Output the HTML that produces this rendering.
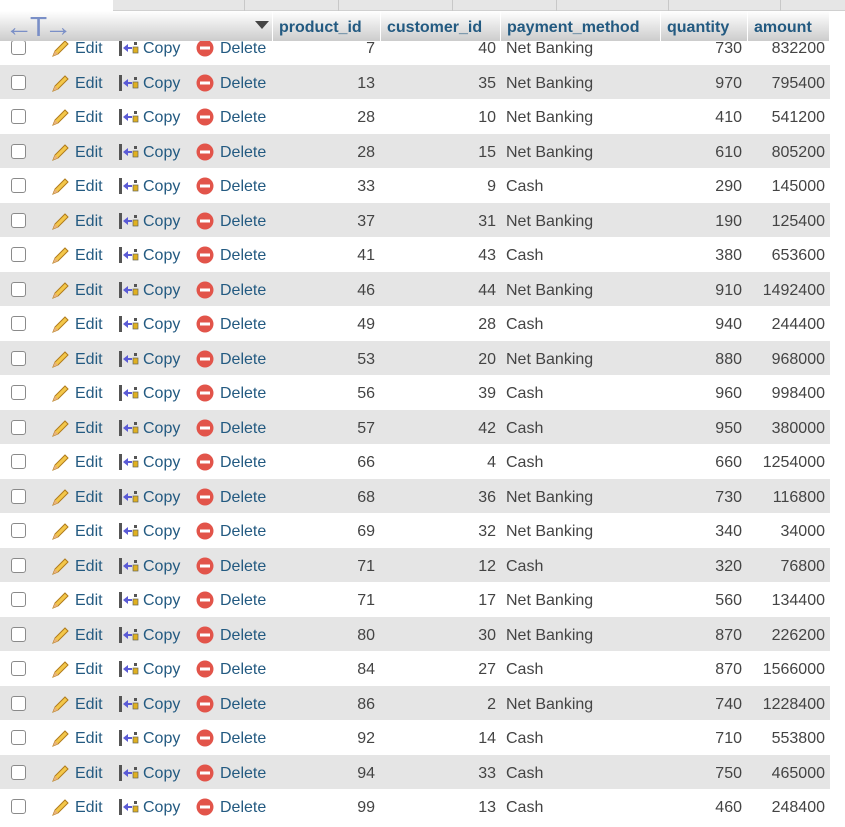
<!DOCTYPE html>
<html><head><meta charset="utf-8"><style>
*{margin:0;padding:0;box-sizing:border-box}
body{width:845px;height:823px;overflow:hidden;background:#fff;font-family:"Liberation Sans",Arial,sans-serif;font-size:16px;color:#444;position:relative}
.top{position:absolute;left:113px;top:0;width:732px;height:11px;background:#e6e6e6;border-bottom:1px solid #d0d0d0}
.top i{position:absolute;top:0;width:1px;height:11px;background:#c8c8c8}
.hdr{position:absolute;left:0;top:11px;width:829px;height:30px;background:linear-gradient(#fff,#ccc);z-index:5}
.hdr span{position:absolute;top:0;height:30px;line-height:34px;font-weight:bold;color:#235a81;padding-left:6px;border-left:1px solid #fff}
.row{position:absolute;left:0;width:830px;height:34.5px;line-height:38px}
.row.g{background:#e5e5e5}
.row>*{position:absolute;top:0}
.cb{left:11px;top:10px!important;width:15px;height:15px;border:1px solid #8a8a8a;border-radius:3px;background:#fff}
.a{color:#235a81}
.e{left:75px}.c{left:143px}.d{left:220px}
.pi{left:50px;top:9px!important}.ci{left:119px;top:9px!important}.di{left:196px;top:9px!important}
.p{right:455px}.cu{right:334px}.pm{left:506px}.q{right:88px}.am{right:5px}
</style></head><body>
<div class="top"><i style="left:131px"></i><i style="left:225px"></i><i style="left:339px"></i><i style="left:443px"></i><i style="left:555px"></i><i style="left:667px"></i></div>
<div class="hdr">
<div style="position:absolute;left:5px;top:-1px;font-size:28px;color:#7a8fc7;letter-spacing:-3px;line-height:34px">←T→</div>
<div style="position:absolute;left:255px;top:10px;width:0;height:0;border-left:7px solid transparent;border-right:7px solid transparent;border-top:8px solid #444"></div>
<span style="left:272px;width:108px">product_id</span>
<span style="left:380px;width:120px">customer_id</span>
<span style="left:500px;width:160px">payment_method</span>
<span style="left:660px;width:87px">quantity</span>
<span style="left:747px;width:82px">amount</span>
</div>
<svg width="0" height="0" style="position:absolute"><defs>
<g id="pen"><path d="M3 17 L5 12 L15 2 L18 5 L8 15 Z" fill="#f3c74a" stroke="#b07a1a" stroke-width="1"/><path d="M3 17 L5 12 L8 15 Z" fill="#e8b27a"/></g>
<g id="cp"><rect x="0" y="1" width="3" height="16" fill="#555"/><path d="M4 9 L9 5 L9 8 L13 8 L13 10 L9 10 L9 13 Z" fill="#5b5bd6"/><rect x="14" y="8" width="5" height="6" fill="#e0b020" stroke="#665" stroke-width=".7"/><rect x="15" y="3" width="3" height="3" fill="#555"/></g>
<g id="del"><circle cx="9" cy="9" r="8.5" fill="#e2544a"/><rect x="4" y="7.5" width="10" height="3" fill="#fff"/></g>
</defs></svg>

<div class="row" style="top:30px"><div class="cb"></div><svg class="pi" width="20" height="18"><use href="#pen"/></svg><span class="a e">Edit</span><svg class="ci" width="20" height="18"><use href="#cp"/></svg><span class="a c">Copy</span><svg class="di" width="18" height="18"><use href="#del"/></svg><span class="a d">Delete</span><span class="p">7</span><span class="cu">40</span><span class="pm">Net Banking</span><span class="q">730</span><span class="am">832200</span></div>
<div class="row g" style="top:64.5px"><div class="cb"></div><svg class="pi" width="20" height="18"><use href="#pen"/></svg><span class="a e">Edit</span><svg class="ci" width="20" height="18"><use href="#cp"/></svg><span class="a c">Copy</span><svg class="di" width="18" height="18"><use href="#del"/></svg><span class="a d">Delete</span><span class="p">13</span><span class="cu">35</span><span class="pm">Net Banking</span><span class="q">970</span><span class="am">795400</span></div>
<div class="row" style="top:99px"><div class="cb"></div><svg class="pi" width="20" height="18"><use href="#pen"/></svg><span class="a e">Edit</span><svg class="ci" width="20" height="18"><use href="#cp"/></svg><span class="a c">Copy</span><svg class="di" width="18" height="18"><use href="#del"/></svg><span class="a d">Delete</span><span class="p">28</span><span class="cu">10</span><span class="pm">Net Banking</span><span class="q">410</span><span class="am">541200</span></div>
<div class="row g" style="top:133.5px"><div class="cb"></div><svg class="pi" width="20" height="18"><use href="#pen"/></svg><span class="a e">Edit</span><svg class="ci" width="20" height="18"><use href="#cp"/></svg><span class="a c">Copy</span><svg class="di" width="18" height="18"><use href="#del"/></svg><span class="a d">Delete</span><span class="p">28</span><span class="cu">15</span><span class="pm">Net Banking</span><span class="q">610</span><span class="am">805200</span></div>
<div class="row" style="top:168px"><div class="cb"></div><svg class="pi" width="20" height="18"><use href="#pen"/></svg><span class="a e">Edit</span><svg class="ci" width="20" height="18"><use href="#cp"/></svg><span class="a c">Copy</span><svg class="di" width="18" height="18"><use href="#del"/></svg><span class="a d">Delete</span><span class="p">33</span><span class="cu">9</span><span class="pm">Cash</span><span class="q">290</span><span class="am">145000</span></div>
<div class="row g" style="top:202.5px"><div class="cb"></div><svg class="pi" width="20" height="18"><use href="#pen"/></svg><span class="a e">Edit</span><svg class="ci" width="20" height="18"><use href="#cp"/></svg><span class="a c">Copy</span><svg class="di" width="18" height="18"><use href="#del"/></svg><span class="a d">Delete</span><span class="p">37</span><span class="cu">31</span><span class="pm">Net Banking</span><span class="q">190</span><span class="am">125400</span></div>
<div class="row" style="top:237px"><div class="cb"></div><svg class="pi" width="20" height="18"><use href="#pen"/></svg><span class="a e">Edit</span><svg class="ci" width="20" height="18"><use href="#cp"/></svg><span class="a c">Copy</span><svg class="di" width="18" height="18"><use href="#del"/></svg><span class="a d">Delete</span><span class="p">41</span><span class="cu">43</span><span class="pm">Cash</span><span class="q">380</span><span class="am">653600</span></div>
<div class="row g" style="top:271.5px"><div class="cb"></div><svg class="pi" width="20" height="18"><use href="#pen"/></svg><span class="a e">Edit</span><svg class="ci" width="20" height="18"><use href="#cp"/></svg><span class="a c">Copy</span><svg class="di" width="18" height="18"><use href="#del"/></svg><span class="a d">Delete</span><span class="p">46</span><span class="cu">44</span><span class="pm">Net Banking</span><span class="q">910</span><span class="am">1492400</span></div>
<div class="row" style="top:306px"><div class="cb"></div><svg class="pi" width="20" height="18"><use href="#pen"/></svg><span class="a e">Edit</span><svg class="ci" width="20" height="18"><use href="#cp"/></svg><span class="a c">Copy</span><svg class="di" width="18" height="18"><use href="#del"/></svg><span class="a d">Delete</span><span class="p">49</span><span class="cu">28</span><span class="pm">Cash</span><span class="q">940</span><span class="am">244400</span></div>
<div class="row g" style="top:340.5px"><div class="cb"></div><svg class="pi" width="20" height="18"><use href="#pen"/></svg><span class="a e">Edit</span><svg class="ci" width="20" height="18"><use href="#cp"/></svg><span class="a c">Copy</span><svg class="di" width="18" height="18"><use href="#del"/></svg><span class="a d">Delete</span><span class="p">53</span><span class="cu">20</span><span class="pm">Net Banking</span><span class="q">880</span><span class="am">968000</span></div>
<div class="row" style="top:375px"><div class="cb"></div><svg class="pi" width="20" height="18"><use href="#pen"/></svg><span class="a e">Edit</span><svg class="ci" width="20" height="18"><use href="#cp"/></svg><span class="a c">Copy</span><svg class="di" width="18" height="18"><use href="#del"/></svg><span class="a d">Delete</span><span class="p">56</span><span class="cu">39</span><span class="pm">Cash</span><span class="q">960</span><span class="am">998400</span></div>
<div class="row g" style="top:409.5px"><div class="cb"></div><svg class="pi" width="20" height="18"><use href="#pen"/></svg><span class="a e">Edit</span><svg class="ci" width="20" height="18"><use href="#cp"/></svg><span class="a c">Copy</span><svg class="di" width="18" height="18"><use href="#del"/></svg><span class="a d">Delete</span><span class="p">57</span><span class="cu">42</span><span class="pm">Cash</span><span class="q">950</span><span class="am">380000</span></div>
<div class="row" style="top:444px"><div class="cb"></div><svg class="pi" width="20" height="18"><use href="#pen"/></svg><span class="a e">Edit</span><svg class="ci" width="20" height="18"><use href="#cp"/></svg><span class="a c">Copy</span><svg class="di" width="18" height="18"><use href="#del"/></svg><span class="a d">Delete</span><span class="p">66</span><span class="cu">4</span><span class="pm">Cash</span><span class="q">660</span><span class="am">1254000</span></div>
<div class="row g" style="top:478.5px"><div class="cb"></div><svg class="pi" width="20" height="18"><use href="#pen"/></svg><span class="a e">Edit</span><svg class="ci" width="20" height="18"><use href="#cp"/></svg><span class="a c">Copy</span><svg class="di" width="18" height="18"><use href="#del"/></svg><span class="a d">Delete</span><span class="p">68</span><span class="cu">36</span><span class="pm">Net Banking</span><span class="q">730</span><span class="am">116800</span></div>
<div class="row" style="top:513px"><div class="cb"></div><svg class="pi" width="20" height="18"><use href="#pen"/></svg><span class="a e">Edit</span><svg class="ci" width="20" height="18"><use href="#cp"/></svg><span class="a c">Copy</span><svg class="di" width="18" height="18"><use href="#del"/></svg><span class="a d">Delete</span><span class="p">69</span><span class="cu">32</span><span class="pm">Net Banking</span><span class="q">340</span><span class="am">34000</span></div>
<div class="row g" style="top:547.5px"><div class="cb"></div><svg class="pi" width="20" height="18"><use href="#pen"/></svg><span class="a e">Edit</span><svg class="ci" width="20" height="18"><use href="#cp"/></svg><span class="a c">Copy</span><svg class="di" width="18" height="18"><use href="#del"/></svg><span class="a d">Delete</span><span class="p">71</span><span class="cu">12</span><span class="pm">Cash</span><span class="q">320</span><span class="am">76800</span></div>
<div class="row" style="top:582px"><div class="cb"></div><svg class="pi" width="20" height="18"><use href="#pen"/></svg><span class="a e">Edit</span><svg class="ci" width="20" height="18"><use href="#cp"/></svg><span class="a c">Copy</span><svg class="di" width="18" height="18"><use href="#del"/></svg><span class="a d">Delete</span><span class="p">71</span><span class="cu">17</span><span class="pm">Net Banking</span><span class="q">560</span><span class="am">134400</span></div>
<div class="row g" style="top:616.5px"><div class="cb"></div><svg class="pi" width="20" height="18"><use href="#pen"/></svg><span class="a e">Edit</span><svg class="ci" width="20" height="18"><use href="#cp"/></svg><span class="a c">Copy</span><svg class="di" width="18" height="18"><use href="#del"/></svg><span class="a d">Delete</span><span class="p">80</span><span class="cu">30</span><span class="pm">Net Banking</span><span class="q">870</span><span class="am">226200</span></div>
<div class="row" style="top:651px"><div class="cb"></div><svg class="pi" width="20" height="18"><use href="#pen"/></svg><span class="a e">Edit</span><svg class="ci" width="20" height="18"><use href="#cp"/></svg><span class="a c">Copy</span><svg class="di" width="18" height="18"><use href="#del"/></svg><span class="a d">Delete</span><span class="p">84</span><span class="cu">27</span><span class="pm">Cash</span><span class="q">870</span><span class="am">1566000</span></div>
<div class="row g" style="top:685.5px"><div class="cb"></div><svg class="pi" width="20" height="18"><use href="#pen"/></svg><span class="a e">Edit</span><svg class="ci" width="20" height="18"><use href="#cp"/></svg><span class="a c">Copy</span><svg class="di" width="18" height="18"><use href="#del"/></svg><span class="a d">Delete</span><span class="p">86</span><span class="cu">2</span><span class="pm">Net Banking</span><span class="q">740</span><span class="am">1228400</span></div>
<div class="row" style="top:720px"><div class="cb"></div><svg class="pi" width="20" height="18"><use href="#pen"/></svg><span class="a e">Edit</span><svg class="ci" width="20" height="18"><use href="#cp"/></svg><span class="a c">Copy</span><svg class="di" width="18" height="18"><use href="#del"/></svg><span class="a d">Delete</span><span class="p">92</span><span class="cu">14</span><span class="pm">Cash</span><span class="q">710</span><span class="am">553800</span></div>
<div class="row g" style="top:754.5px"><div class="cb"></div><svg class="pi" width="20" height="18"><use href="#pen"/></svg><span class="a e">Edit</span><svg class="ci" width="20" height="18"><use href="#cp"/></svg><span class="a c">Copy</span><svg class="di" width="18" height="18"><use href="#del"/></svg><span class="a d">Delete</span><span class="p">94</span><span class="cu">33</span><span class="pm">Cash</span><span class="q">750</span><span class="am">465000</span></div>
<div class="row" style="top:789px"><div class="cb"></div><svg class="pi" width="20" height="18"><use href="#pen"/></svg><span class="a e">Edit</span><svg class="ci" width="20" height="18"><use href="#cp"/></svg><span class="a c">Copy</span><svg class="di" width="18" height="18"><use href="#del"/></svg><span class="a d">Delete</span><span class="p">99</span><span class="cu">13</span><span class="pm">Cash</span><span class="q">460</span><span class="am">248400</span></div>
</body></html>
